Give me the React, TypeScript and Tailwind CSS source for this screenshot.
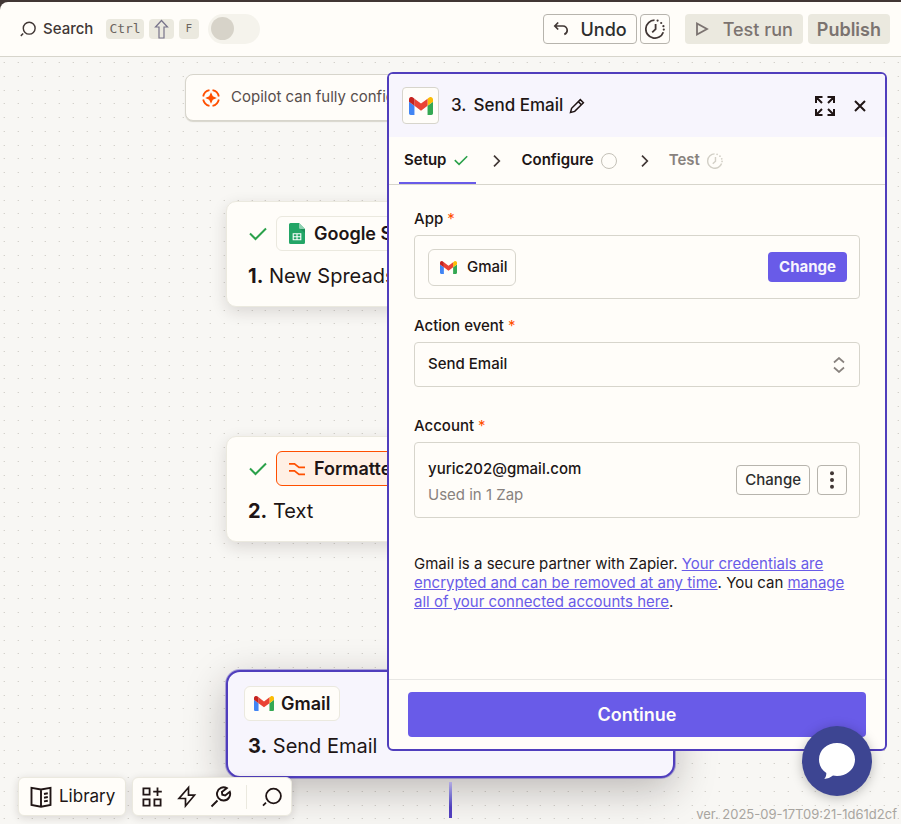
import type { ReactNode } from "react";

const font = "font-['Inter','Liberation_Sans',sans-serif]";

function GmailLogo({ className }: { className: string }) {
  return (
    <svg viewBox="52 42 88 66" className={className} aria-hidden="true">
      <path fill="#4285f4" d="M58 108h14V74L52 59v43c0 3.32 2.69 6 6 6" />
      <path fill="#34a853" d="M120 108h14c3.32 0 6-2.69 6-6V59l-20 15" />
      <path fill="#fbbc04" d="M120 48v26l20-15v-8c0-7.42-8.47-11.65-14.4-7.2" />
      <path fill="#ea4335" d="M72 74V48l24 18 24-18v26L96 92" />
      <path fill="#c5221f" d="M52 51v8l20 15V48l-5.6-4.4c-5.94-4.45-14.4-.22-14.4 7.2" />
    </svg>
  );
}

function SearchIcon({ className }: { className: string }) {
  return (
    <svg viewBox="0 0 20 20" fill="none" stroke="currentColor" strokeWidth="1.8" className={className} aria-hidden="true">
      <circle cx="11.5" cy="9" r="7.4" />
      <path d="M4 15.6 1 18.6" />
    </svg>
  );
}

function CheckIcon({ className }: { className: string }) {
  return (
    <svg viewBox="0 0 18 14" fill="none" stroke="#2ba14b" strokeWidth="2" className={className} aria-hidden="true">
      <path d="m1 6.5 5.5 5.5L17 1.5" />
    </svg>
  );
}

function ClockIcon({ className }: { className: string }) {
  return (
    <svg viewBox="0 0 20 20" fill="none" stroke="currentColor" strokeWidth="1.8" className={className} aria-hidden="true">
      <path d="M9.500 1.100A9 9 0 1 0 18.300 13.200" />
      <path d="M10.600 5v5.200L7.200 13.400" />
      <g fill="currentColor" stroke="none">
        <circle cx="12.6" cy="1.6" r="1.1" />
        <circle cx="16.2" cy="4" r="1.1" />
        <circle cx="18.4" cy="7.2" r="1.1" />
        <circle cx="18.800" cy="10.600" r="1.1" />
      </g>
    </svg>
  );
}

function ChevronIcon() {
  return (
    <svg viewBox="0 0 8 12" fill="none" stroke="#413735" strokeWidth="1.7" className="h-3 w-2" aria-hidden="true">
      <path d="m1 .7 5.3 5.3L1 11.3" />
    </svg>
  );
}

function DotGrid() {
  const steps = [4, 18, 32, 45];
  return (
    <svg className="absolute inset-0 h-full w-full" aria-hidden="true">
      <defs>
        <pattern id="dots" width="55" height="55" patternUnits="userSpaceOnUse">
          {steps.map((y) => steps.map((x) => (
            <g key={`${x}-${y}`}>
              <rect x={x} y={y + 1} width="1" height="1" fill="#d3d1cb" />
              <rect x={x - 1} y={y + 1} width="1" height="1" fill="#ebe9e5" />
            </g>
          )))}
        </pattern>
      </defs>
      <rect width="100%" height="100%" fill="url(#dots)" />
    </svg>
  );
}

function Kbd({ children }: { children: ReactNode }) {
  return (
    <kbd className="flex h-5 items-center rounded bg-[#ebe9df] px-[3px] font-['DejaVu_Sans_Mono',monospace] text-[13px] leading-5 text-[#6b6560]">
      {children}
    </kbd>
  );
}

function TopBar() {
  return (
    <div className="bg-[#413735] pt-[2px]">
      <header className="flex h-[55px] items-center justify-between rounded-tl-lg border-b border-[#d7d5cc] bg-[#fffdf9] pr-[11px] pl-5">
        <div className="flex items-center">
          <button type="button" className="flex items-center gap-[7px] text-[15px] font-medium text-[#413735]">
            <SearchIcon className="h-4 w-4" />
            Search
          </button>
          <div className="ml-[13px] flex items-center gap-[5px]">
            <Kbd>Ctrl</Kbd>
            <Kbd>
              <svg viewBox="0 0 19 20" fill="none" stroke="#77738a" strokeWidth="1.2" className="h-5 w-[19px]" aria-hidden="true">
                <path d="M9.5 1.5 15.5 8H12v11H7V8H3.500z" />
              </svg>
            </Kbd>
            <Kbd>
              <span className="w-[14px] text-center text-[11px]">F</span>
            </Kbd>
          </div>
          <input
            type="checkbox"
            role="switch"
            aria-label="Zap on or off"
            className="ml-[9px] h-[30px] w-[52px] appearance-none rounded-full bg-[#f5f3ec] p-[3px] before:block before:size-[23px] before:rounded-full before:bg-[#d7d3c9]"
          />
        </div>
        <div className="flex items-center text-[18px] font-medium">
          <button type="button" className="flex h-[30px] items-center gap-[11px] rounded border border-[#b7b4ad] px-[9px] text-[#2d2e2e]">
            <svg viewBox="0 0 16 16" fill="none" stroke="#413735" strokeWidth="1.7" className="size-4" aria-hidden="true">
              <path d="M5.200 1.500 1.800 5l3.400 3.500M1.800 5H10a4.200 4.200 0 0 1 4.200 4.200c0 2-1 3.500-2.900 4.200" />
            </svg>
            Undo
          </button>
          <button type="button" aria-label="Version history" className="ml-[3px] flex size-[30px] items-center justify-center rounded border border-[#b7b4ad] text-[#413735]">
            <ClockIcon className="size-5" />
          </button>
          <button type="button" className="ml-[15px] flex h-[30px] items-center gap-[14px] rounded bg-[#ebe9df] px-[10px] text-[#7b7370]">
            <svg viewBox="0 0 14 14" fill="none" stroke="currentColor" strokeWidth="1.8" className="size-[14px]" aria-hidden="true">
              <path d="M2 1.500v11L12 7z" />
            </svg>
            Test run
          </button>
          <button type="button" className="ml-[5px] h-[30px] rounded bg-[#ebe9df] px-[9px] font-semibold text-[#7b7370]">
            Publish
          </button>
        </div>
      </header>
    </div>
  );
}

function StepCard({ done, selected, highlighted, logo, app, index, title }: {
  done?: boolean; selected?: boolean; highlighted?: boolean;
  logo: ReactNode; app: string; index: number; title: string;
}) {
  return (
    <article
      className={
        selected
          ? "h-[108px] w-full rounded-[14px] border-2 border-[#503ebd] bg-[#f7f5fd] px-4 pt-[14px] shadow-[0_12px_40px_rgba(32,21,21,0.28)] ring-1 ring-[#503ebd]/40"
          : "h-[106px] w-full rounded-[10px] border border-[#ebe9df] bg-[#fffdf9] px-4 pt-[14px] shadow-[0_5px_16px_rgba(32,21,21,0.14)]"
      }
    >
      <div className="flex items-center">
        {done && <CheckIcon className="mr-[9px] ml-[6px] h-[14px] w-[18px]" />}
        <div
          className={
            highlighted
              ? "flex h-[35px] items-center gap-[9px] rounded-md border border-[#ff4f00] bg-[#fff0e5] px-3 text-[18px] font-semibold"
              : selected
                ? "flex h-[35px] items-center gap-[7px] rounded-md border border-[#ebe9df] bg-[#fffdf9] px-[9px] text-[18px] font-semibold"
                : "flex h-[35px] items-center gap-[9px] rounded-md border border-[#ebe9df] bg-[#fffdf9] px-3 text-[18px] font-semibold"
          }
        >
          {logo}
          {app}
        </div>
      </div>
      <h2 className={selected ? "mt-[11px] pl-1 text-[20px] leading-[28px]" : "mt-[11px] pl-[5px] text-[20px] leading-[28px]"}>
        <b className="font-bold">{index}.</b> {title}
      </h2>
    </article>
  );
}

function Canvas() {
  return (
    <div className="relative flex flex-col items-center pt-[17px]">
      <div className="flex h-[47px] w-[531px] max-w-full items-center gap-2 rounded-lg border border-[#d7d5cc] bg-[#fffdf9] px-4 text-[15px] text-[#574e4c] shadow-[0_1px_1px_#d7d5cc]">
        <svg viewBox="0 0 18 18" fill="none" stroke="#ff4f00" strokeWidth="1.8" className="size-[18px]" aria-hidden="true">
          <path d="M10.500 1.200a8 8 0 0 1 6.300 6.300M16.800 10.500a8 8 0 0 1-6.300 6.300M7.500 16.800a8 8 0 0 1-6.300-6.300M1.200 7.500a8 8 0 0 1 6.300-6.300" />
          <path fill="#ff4f00" stroke="none" d="M9 3.200 10.800 7.200 14.800 9l-4 1.800L9 14.800l-1.800-4L3.200 9l4-1.800z" />
        </svg>
        <span className="pl-[3px]">Copilot can fully configure this step</span>
      </div>
      <div className="mt-[80px] flex w-[449px] flex-col text-[#201515]">
        <StepCard
          done
          index={1}
          app="Google Sheets"
          title="New Spreadsheet Row"
          logo={
            <svg viewBox="0 0 16 21" className="h-[21px] w-4" aria-hidden="true">
              <path fill="#23a566" d="M1.500 0H10l6 6v13.500a1.500 1.500 0 0 1-1.500 1.500h-13A1.500 1.500 0 0 1 0 19.500v-18A1.500 1.500 0 0 1 1.500 0z" />
              <path fill="#8ed1b1" d="M10 0l6 6h-4.500A1.500 1.500 0 0 1 10 4.500z" />
              <path fill="#1c8f57" d="M11 6h5v4z" />
              <path fill="none" stroke="#fff" strokeWidth="1.100" d="M4.200 10.700h7.600v6H4.200zM4.200 13.700h7.600M8 10.700v6" />
            </svg>
          }
        />
        <div className="mt-[129px]">
          <StepCard
            done
            highlighted
            index={2}
            app="Formatter by Zapier"
            title="Text"
            logo={
              <svg viewBox="0 0 16 14" fill="none" stroke="#ff4f00" strokeWidth="1.700" className="h-[14px] w-4" aria-hidden="true">
                <path d="M0 1.800h5.500L10 5.300h6M0 8.800h5.500L10 12.300h6" />
              </svg>
            }
          />
        </div>
        <div className="mt-[128px]">
          <StepCard selected index={3} app="Gmail" title="Send Email" logo={<GmailLogo className="h-[15px] w-5" />} />
        </div>
      </div>
      <div className="mt-1 h-9 w-[3px] bg-linear-to-b from-[#b3abe2] to-[#503ebd] to-70%" />
    </div>
  );
}

function Required() {
  return <span className="font-normal text-[#ff4f00]">*</span>;
}

function SetupPanel() {
  return (
    <section aria-label="Step setup" className="absolute top-[15px] right-[14px] bottom-[73px] flex w-[500px] max-w-full flex-col overflow-hidden rounded-md border-2 border-[#503ebd] bg-[#fffdf9] text-[15px] text-[#201515]">
      <header className="flex h-[63px] shrink-0 items-center bg-[#f7f5fd] pr-[18px] pl-[13px]">
        <span className="flex size-[37px] items-center justify-center rounded border border-[#d7d5cc] bg-[#fffdf9]">
          <GmailLogo className="h-[18px] w-6" />
        </span>
        <h1 className="flex gap-[7px] pl-3 text-[17px] font-medium">
          <span>3.</span>
          <span>Send Email</span>
        </h1>
        <button type="button" aria-label="Rename step" className="ml-[6px]">
          <svg viewBox="0 0 16 16" fill="none" stroke="currentColor" strokeWidth="1.500" className="size-4" aria-hidden="true">
            <path d="M1.500 14.500 2.600 10.300 11.300 1.600 14.400 4.700 5.700 13.400zM9.300 3.600l3.100 3.100" />
          </svg>
        </button>
        <button type="button" aria-label="Expand panel" className="ml-auto">
          <svg viewBox="0 0 20 20" fill="none" stroke="currentColor" strokeWidth="2" className="size-5" aria-hidden="true">
            <path d="M7.500 1H1v6M1 1l6 6M12.500 1H19v6M19 1l-6 6M7.500 19H1v-6M1 19l6-6M12.500 19H19v-6M19 19l-6-6" />
          </svg>
        </button>
        <button type="button" aria-label="Close panel" className="ml-[18px]">
          <svg viewBox="0 0 14 14" fill="none" stroke="currentColor" strokeWidth="2" className="size-[14px]" aria-hidden="true">
            <path d="m2 2 10 10M12 2 2 12" />
          </svg>
        </button>
      </header>

      <nav aria-label="Setup steps" className="flex h-12 shrink-0 items-center border-b border-[#d7d5cc] pl-[10px] font-semibold">
        <button type="button" aria-current="step" className="flex h-full items-center gap-2 border-b-2 border-[#695be8] px-[5px] pt-[2px]">
          Setup
          <CheckIcon className="mr-[3px] h-[11px] w-[14px]" />
        </button>
        <span className="ml-[17px]"><ChevronIcon /></span>
        <button type="button" className="ml-5 flex items-center gap-[7px]">
          Configure
          <span className="size-4 rounded-full border border-[#c4c1b8]" />
        </button>
        <span className="ml-6"><ChevronIcon /></span>
        <button type="button" className="ml-5 flex items-center gap-[7px] text-[#88827e]">
          Test
          <span className="text-[#d3d0c7]"><ClockIcon className="size-4" /></span>
        </button>
      </nav>

      <div className="flex flex-1 flex-col px-[25px] pt-6">
        <h2 className="font-medium leading-5">App <Required /></h2>
        <div className="mt-[6px] flex h-[64px] shrink-0 items-center justify-between rounded border border-[#d7d5cc] pr-3 pl-[13px]">
          <span className="flex h-[37px] items-center gap-[10px] rounded-md border border-[#d7d5cc] pr-[7px] pl-[11px] font-medium">
            <GmailLogo className="h-[13px] w-[17px]" />
            Gmail
          </span>
          <button type="button" className="h-[30px] rounded bg-[#695be8] px-[11px] font-bold text-[#f7f5fd]">Change</button>
        </div>

        <label htmlFor="action-event" className="mt-[17px] font-medium leading-5">Action event <Required /></label>
        <div className="relative mt-[6px] shrink-0">
          <select id="action-event" className="h-[45px] w-full appearance-none rounded-sm border border-[#d7d5cc] bg-transparent px-[13px] font-medium">
            <option>Send Email</option>
          </select>
          <svg viewBox="0 0 12 16" fill="none" stroke="#88827e" strokeWidth="1.700" className="pointer-events-none absolute inset-y-0 right-[15px] my-auto h-4 w-3" aria-hidden="true">
            <path d="M1 5.500 6 1l5 4.500M1 10.500 6 15l5-4.500" />
          </svg>
        </div>

        <h2 className="mt-[29px] font-medium leading-5">Account <Required /></h2>
        <div className="mt-[6px] flex h-[76px] shrink-0 items-center rounded border border-[#d7d5cc] pr-3 pl-[13px]">
          <div className="flex flex-1 flex-col gap-[6px] pt-[3px] leading-5">
            <span className="font-medium">yuric202@gmail.com</span>
            <span className="text-[#88827e]">Used in 1 Zap</span>
          </div>
          <button type="button" className="h-[30px] rounded border border-[#b7b4ad] px-2 font-medium text-[#2d2e2e]">Change</button>
          <button type="button" aria-label="Account options" className="ml-[7px] flex size-[30px] items-center justify-center rounded border border-[#b7b4ad]">
            <svg viewBox="0 0 4 18" fill="#413735" className="h-[18px] w-1" aria-hidden="true">
              <circle cx="2" cy="2.200" r="2" />
              <circle cx="2" cy="9" r="2" />
              <circle cx="2" cy="15.800" r="2" />
            </svg>
          </button>
        </div>

        <p className="mt-9 leading-[19px]">
          Gmail is a secure partner with Zapier.{" "}
          <a href="#credentials" className="text-[#695be8] underline">Your credentials are encrypted and can be removed at any time</a>. You can{" "}
          <a href="#accounts" className="text-[#695be8] underline">manage all of your connected accounts here</a>.
        </p>
      </div>

      <footer className="border-t border-[#e8e7e4] px-[19px] py-3">
        <button type="button" className="h-[45px] w-full rounded bg-[#695be8] text-[18px] font-semibold text-[#fffdf9]">Continue</button>
      </footer>
    </section>
  );
}

function BottomTools() {
  return (
    <div className="absolute bottom-2 left-[18px] flex gap-[6px] text-[#201515]">
      <button type="button" className="flex h-[39px] items-center gap-[6px] rounded-md border border-[#ebe9df] bg-[#fffdf9] px-[10px] text-[17px] shadow-[0_2px_8px_rgba(32,21,21,0.14)]">
        <svg viewBox="0 0 24 24" fill="none" stroke="currentColor" strokeWidth="1.900" className="size-6" aria-hidden="true">
          <path d="M12 4.500 2.500 2.800v17.200L12 21.700l9.500-1.700V2.800zM12 4.500v17.200M15 9l3.800-.7M15 12.700l3.800-.7M15 16.400l3.800-.7" />
        </svg>
        Library
      </button>
      <div className="flex h-[39px] items-center rounded-md border border-[#ebe9df] bg-[#fffdf9] px-[9px] shadow-[0_2px_8px_rgba(32,21,21,0.14)]">
        <button type="button" aria-label="Add step">
          <svg viewBox="0 0 20 20" fill="none" stroke="currentColor" strokeWidth="1.800" className="size-5" aria-hidden="true">
            <path d="M1.400 1.400h6.200v6.200H1.400zM1.400 12.400h6.200v6.200H1.400zM12.400 12.400h6.200v6.200h-6.200zM15.500.5v8.500M11.200 4.700h8.600" />
          </svg>
        </button>
        <button type="button" aria-label="Triggers" className="ml-[14px]">
          <svg viewBox="0 0 22 24" fill="none" stroke="currentColor" strokeWidth="1.700" className="h-6 w-[22px]" aria-hidden="true">
            <path d="M12.500 2.500 3 13.500h6.500v7.500L18.500 10.200h-6z" />
          </svg>
        </button>
        <button type="button" aria-label="Settings" className="ml-3">
          <svg viewBox="0 0 22 22" fill="none" stroke="currentColor" strokeWidth="1.900" className="size-[22px]" aria-hidden="true">
            <path d="M1.500 20.500 7.500 14.500M16.800 2.200a6.600 6.600 0 1 0 3 3.600l-4.600 3.600-2.900-.6-.4-2.800z" />
          </svg>
        </button>
        <span className="ml-[14px] h-6 w-px bg-[#ebe9df]" />
        <button type="button" aria-label="Search steps" className="ml-[15px]">
          <SearchIcon className="size-5" />
        </button>
      </div>
    </div>
  );
}

export default function App() {
  return (
    <div className={`flex h-screen flex-col overflow-hidden ${font}`}>
      <TopBar />
      <main className="relative flex-1 overflow-hidden bg-[#f8f7f4]">
        <DotGrid />
        <Canvas />
        <SetupPanel />
        <BottomTools />
        <span className="absolute right-1 bottom-[2px] text-[13px] leading-4 text-[#a8a5a0]">ver. 2025-09-17T09:21-1d61d2cf</span>
        <button type="button" aria-label="Open chat" className="absolute right-[29px] bottom-7 flex size-[70px] items-center justify-center rounded-full bg-[#3d4592] shadow-[0_2px_12px_rgba(0,0,0,0.25)]">
          <svg viewBox="0 0 36 36" fill="#fff" className="size-9" aria-hidden="true">
            <path d="M18 0C28 0 36 7 36 16.500S28 33 18 33c-1.500 0-2.800-.1-4-.4-2.500 2-5.500 3.200-8.700 3.400 1.400-1.700 2.100-3.700 2-6C2.600 27 0 22.500 0 16.500 0 7 8 0 18 0z" />
          </svg>
        </button>
      </main>
    </div>
  );
}
